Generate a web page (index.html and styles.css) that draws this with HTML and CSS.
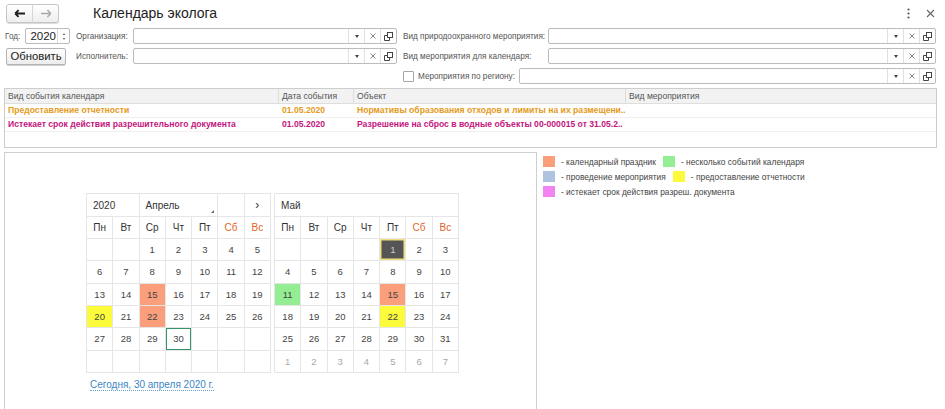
FILE: index.html
```html
<!DOCTYPE html>
<html lang="ru">
<head>
<meta charset="utf-8">
<title>Календарь эколога</title>
<link rel="stylesheet" href="styles.css">
</head>
<body>
<header class="topbar">
  <div class="nav">
    <button class="navbtn back"><svg width="12" height="9" viewBox="0 0 12 9"><path d="M1.2 4.5H11M1.2 4.5L4.6 1.1M1.2 4.5L4.6 7.9" stroke="#1e1e1e" stroke-width="1.8" fill="none"/></svg></button>
    <button class="navbtn fwd"><svg width="12" height="9" viewBox="0 0 12 9"><path d="M1 4.5H10.8M10.8 4.5L7.4 1.1M10.8 4.5L7.4 7.9" stroke="#a8a8a8" stroke-width="1.4" fill="none"/></svg></button>
  </div>
  <h1 class="title">Календарь эколога</h1>
  <div class="winctl">
    <span class="wbtn"><svg width="3" height="11" viewBox="0 0 3 11"><circle cx="1.5" cy="1.5" r="1.1" fill="#555"/><circle cx="1.5" cy="5.5" r="1.1" fill="#555"/><circle cx="1.5" cy="9.5" r="1.1" fill="#555"/></svg></span>
    <span class="wbtn"><svg width="9" height="9" viewBox="0 0 9 9"><path d="M1 1L8 8M8 1L1 8" stroke="#666" stroke-width="1.1"/></svg></span>
  </div>
</header>

<section class="form">
  <div class="yearwrap">
    <span class="lbl">Год:</span>
    <div class="year"><span class="yv">2020</span><span class="spin"><i class="up"></i><i class="dn"></i></span></div>
  </div>
  <span class="lbl">Организация:</span>
  <div class="field"><span class="inp"></span><span class="fb"><i class="tri"></i></span><span class="fb"><svg width="6" height="6" viewBox="0 0 6 6"><path d="M0.5 0.5L5.5 5.5M5.5 0.5L0.5 5.5" stroke="#777" stroke-width="0.9"/></svg></span><span class="fb"><svg width="9" height="9" viewBox="0 0 9 9"><rect x="3.5" y="0.5" width="5" height="5" fill="none" stroke="#444"/><path d="M3 3.5H0.5V8.5H5.5V6" fill="none" stroke="#444"/></svg></span></div>
  <span></span>
  <span class="lbl">Вид природоохранного мероприятия:</span>
  <div class="field"><span class="inp"></span><span class="fb"><i class="tri"></i></span><span class="fb"><svg width="6" height="6" viewBox="0 0 6 6"><path d="M0.5 0.5L5.5 5.5M5.5 0.5L0.5 5.5" stroke="#777" stroke-width="0.9"/></svg></span><span class="fb"><svg width="9" height="9" viewBox="0 0 9 9"><rect x="3.5" y="0.5" width="5" height="5" fill="none" stroke="#444"/><path d="M3 3.5H0.5V8.5H5.5V6" fill="none" stroke="#444"/></svg></span></div>

  <div class="btncell"><button class="refresh">Обновить</button></div>
  <span class="lbl">Исполнитель:</span>
  <div class="field"><span class="inp"></span><span class="fb"><i class="tri"></i></span><span class="fb"><svg width="6" height="6" viewBox="0 0 6 6"><path d="M0.5 0.5L5.5 5.5M5.5 0.5L0.5 5.5" stroke="#777" stroke-width="0.9"/></svg></span><span class="fb"><svg width="9" height="9" viewBox="0 0 9 9"><rect x="3.5" y="0.5" width="5" height="5" fill="none" stroke="#444"/><path d="M3 3.5H0.5V8.5H5.5V6" fill="none" stroke="#444"/></svg></span></div>
  <span></span>
  <span class="lbl">Вид мероприятия для календаря:</span>
  <div class="field"><span class="inp"></span><span class="fb"><i class="tri"></i></span><span class="fb"><svg width="6" height="6" viewBox="0 0 6 6"><path d="M0.5 0.5L5.5 5.5M5.5 0.5L0.5 5.5" stroke="#777" stroke-width="0.9"/></svg></span><span class="fb"><svg width="9" height="9" viewBox="0 0 9 9"><rect x="3.5" y="0.5" width="5" height="5" fill="none" stroke="#444"/><path d="M3 3.5H0.5V8.5H5.5V6" fill="none" stroke="#444"/></svg></span></div>

  <div class="regionrow">
    <span class="chk"></span>
    <span class="lbl rlbl">Мероприятия по региону:</span>
    <div class="field"><span class="inp"></span><span class="fb"><i class="tri"></i></span><span class="fb"><svg width="6" height="6" viewBox="0 0 6 6"><path d="M0.5 0.5L5.5 5.5M5.5 0.5L0.5 5.5" stroke="#777" stroke-width="0.9"/></svg></span><span class="fb"><svg width="9" height="9" viewBox="0 0 9 9"><rect x="3.5" y="0.5" width="5" height="5" fill="none" stroke="#444"/><path d="M3 3.5H0.5V8.5H5.5V6" fill="none" stroke="#444"/></svg></span></div>
  </div>
</section>

<section class="grid">
  <div class="ghead">
    <span>Вид события календаря</span><span>Дата события</span><span>Объект</span><span>Вид мероприятия</span>
  </div>
  <div class="grow orange">
    <span>Предоставление отчетности</span><span>01.05.2020</span><span>Нормативы образования отходов и лимиты на их размещени..</span><span></span>
  </div>
  <div class="grow magenta">
    <span>Истекает срок действия разрешительного документа</span><span>01.05.2020</span><span>Разрешение на сброс в водные объекты 00-000015 от 31.05.2..</span><span></span>
  </div>
</section>

<section class="bottom">
  <div class="calpanel">
    <div class="cals">
      <div class="cal">
        <div class="ch s2">2020</div><div class="ch s3 month">Апрель<i class="corner"></i></div><div class="ch"></div><div class="ch ctr">›</div>
        <div class="dname">Пн</div><div class="dname">Вт</div><div class="dname">Ср</div><div class="dname">Чт</div><div class="dname">Пт</div><div class="dname we">Сб</div><div class="dname we">Вс</div>
        <div class="d"></div><div class="d"></div><div class="d">1</div><div class="d">2</div><div class="d">3</div><div class="d">4</div><div class="d">5</div>
        <div class="d">6</div><div class="d">7</div><div class="d">8</div><div class="d">9</div><div class="d">10</div><div class="d">11</div><div class="d">12</div>
        <div class="d">13</div><div class="d">14</div><div class="d hol">15</div><div class="d">16</div><div class="d">17</div><div class="d">18</div><div class="d">19</div>
        <div class="d rep">20</div><div class="d">21</div><div class="d hol">22</div><div class="d">23</div><div class="d">24</div><div class="d">25</div><div class="d">26</div>
        <div class="d">27</div><div class="d">28</div><div class="d">29</div><div class="d today">30</div><div class="d"></div><div class="d"></div><div class="d"></div>
        <div class="d"></div><div class="d"></div><div class="d"></div><div class="d"></div><div class="d"></div><div class="d"></div><div class="d"></div>
      </div>
      <div class="cal">
        <div class="ch s7">Май</div>
        <div class="dname">Пн</div><div class="dname">Вт</div><div class="dname">Ср</div><div class="dname">Чт</div><div class="dname">Пт</div><div class="dname we">Сб</div><div class="dname we">Вс</div>
        <div class="d"></div><div class="d"></div><div class="d"></div><div class="d"></div><div class="d sel">1</div><div class="d">2</div><div class="d">3</div>
        <div class="d">4</div><div class="d">5</div><div class="d">6</div><div class="d">7</div><div class="d">8</div><div class="d">9</div><div class="d">10</div>
        <div class="d multi">11</div><div class="d">12</div><div class="d">13</div><div class="d">14</div><div class="d hol">15</div><div class="d">16</div><div class="d">17</div>
        <div class="d">18</div><div class="d">19</div><div class="d">20</div><div class="d">21</div><div class="d rep">22</div><div class="d">23</div><div class="d">24</div>
        <div class="d">25</div><div class="d">26</div><div class="d">27</div><div class="d">28</div><div class="d">29</div><div class="d">30</div><div class="d">31</div>
        <div class="d oth">1</div><div class="d oth">2</div><div class="d oth">3</div><div class="d oth">4</div><div class="d oth">5</div><div class="d oth">6</div><div class="d oth">7</div>
      </div>
    </div>
    <a class="todaylink" href="#">Сегодня, 30 апреля 2020 г.</a>
  </div>

  <div class="legend">
    <div class="lrow"><span class="sq c-hol"></span><span class="lt">- календарный праздник</span><span class="sq c-multi"></span><span class="lt">- несколько событий календаря</span></div>
    <div class="lrow"><span class="sq c-event"></span><span class="lt">- проведение мероприятия</span><span class="sq c-rep"></span><span class="lt">- предоставление отчетности</span></div>
    <div class="lrow"><span class="sq c-exp"></span><span class="lt">- истекает срок действия разреш. документа</span></div>
  </div>
</section>
</body>
</html>
```

FILE: styles.css
```css
html, body {
  margin: 0;
  height: 409px;
  overflow: hidden;
  background: #fff;
}
body {
  font-family: "Liberation Sans", Arial, sans-serif;
  color: #333;
  font-size: 8.6px;
}

/* top bar */
.topbar {
  display: flex;
  align-items: center;
  height: 26px;
  padding-left: 6px;
  padding-right: 4px;
}
.nav {
  display: flex;
  height: 19px;
}
.navbtn {
  width: 27px;
  height: 19px;
  margin: 0;
  padding: 0;
  border: 1px solid #c6c6c6;
  background: linear-gradient(#ffffff, #eeeeee);
  display: flex;
  align-items: center;
  justify-content: center;
  box-shadow: 0 1px 0 #dcdcdc;
}
.navbtn.back { border-radius: 3px 0 0 3px; }
.navbtn.fwd { border-radius: 0 3px 3px 0; border-left: 1px solid #d6d6d6; margin-left: -1px; }
.title {
  margin: 0 0 0 34px;
  font-size: 14px;
  font-weight: normal;
  color: #222;
}
.winctl {
  margin-left: auto;
  display: flex;
}
.wbtn {
  width: 22px;
  height: 18px;
  display: flex;
  align-items: center;
  justify-content: center;
}

/* form */
.form {
  display: grid;
  grid-template-columns: 71px 57px 264px 6px 145px 388px;
  grid-auto-rows: 16px;
  row-gap: 4px;
  margin: 2px 0 0 5px;
  align-items: center;
}
.lbl {
  color: #555;
  font-size: 8.2px;
  white-space: nowrap;
}
.yearwrap {
  display: flex;
  align-items: center;
}
.yearwrap .lbl { width: 20px; }
.year {
  display: flex;
  width: 45px;
  height: 16px;
  box-sizing: border-box;
  border: 1px solid #bcbcbc;
  border-radius: 2px;
}
.yv {
  width: 31px;
  font-size: 11.5px;
  color: #222;
  line-height: 14px;
  text-align: right;
  padding-right: 1px;
  box-sizing: border-box;
}
.spin {
  flex: 1;
  border-left: 1px solid #dcdcdc;
  display: flex;
  flex-direction: column;
  align-items: center;
  justify-content: center;
  gap: 3px;
}
.spin i {
  display: block;
  width: 0;
  height: 0;
  border-left: 1.5px solid transparent;
  border-right: 1.5px solid transparent;
}
.spin .up { border-bottom: 2px solid #444; }
.spin .dn { border-top: 2px solid #444; }

.field {
  display: flex;
  height: 16px;
  box-sizing: border-box;
  border: 1px solid #bcbcbc;
  border-radius: 2px;
  background: #fff;
}
.field .inp { flex: 1; }
.field .fb {
  width: 15px;
  border-left: 1px solid #e0e0e0;
  display: flex;
  align-items: center;
  justify-content: center;
}
.tri {
  display: block;
  width: 0;
  height: 0;
  border-left: 2px solid transparent;
  border-right: 2px solid transparent;
  border-top: 3px solid #444;
}
.btncell { display: flex; }
.refresh {
  margin: 0 0 0 1px;
  width: 60px;
  height: 17px;
  padding: 0;
  font-family: "Liberation Sans", Arial, sans-serif;
  font-size: 11.3px;
  color: #222;
  border: 1px solid #b4b4b4;
  border-radius: 2px;
  background: linear-gradient(#ffffff, #ececec);
  box-shadow: 0 1px 0 #d0d0d0;
}
.regionrow {
  grid-column: 5 / 7;
  display: flex;
  align-items: center;
}
.chk {
  width: 11px;
  height: 11px;
  box-sizing: border-box;
  border: 1px solid #a6a6a6;
  border-radius: 1px;
  background: #fff;
  margin-right: 4px;
}
.rlbl { width: 101px; }
.regionrow .field { flex: 1; }

/* table */
.grid {
  margin: 4px 8px 0 4px;
  height: 60px;
  box-sizing: border-box;
  border: 1px solid #cdcdcd;
}
.ghead, .grow {
  display: grid;
  grid-template-columns: 273px 75px 272px 1fr;
}
.ghead {
  height: 14px;
  background: #f2f2f2;
  border-bottom: 1px solid #dedede;
  color: #555;
  font-size: 8.6px;
  line-height: 14px;
}
.ghead span {
  padding-left: 3px;
  border-left: 1px solid #dcdcdc;
}
.ghead span:first-child { border-left: none; }
.grow {
  height: 13px;
  line-height: 13px;
  border-bottom: 1px solid #f0f0f0;
  font-weight: bold;
  font-size: 8.6px;
}
.grow span {
  padding-left: 4px;
  white-space: nowrap;
  overflow: hidden;
}
.grow span:first-child { padding-left: 3px; }
.orange { color: #e59a1c; }
.magenta { color: #c4157e; }

/* bottom */
.bottom {
  display: flex;
  margin: 4px 0 0 4px;
}
.calpanel {
  width: 533px;
  height: 258px;
  box-sizing: border-box;
  border: 1px solid #cfcfcf;
  padding: 40px 0 0 81px;
}
.cals {
  display: flex;
  gap: 3px;
}
.cal {
  display: grid;
  width: 185px;
  grid-template-columns: repeat(7, 1fr);
  grid-template-rows: 23px 22px repeat(6, 22.33px);
  border-top: 1px solid #e6e6e6;
  border-left: 1px solid #e6e6e6;
  box-sizing: border-box;
}
.cal > div {
  border-right: 1px solid #e6e6e6;
  border-bottom: 1px solid #e6e6e6;
  box-sizing: border-box;
  display: flex;
  align-items: center;
  justify-content: center;
}
.ch {
  font-size: 10px;
  color: #333;
  justify-content: flex-start !important;
  padding-left: 6px;
  position: relative;
}
.ch.ctr { justify-content: center !important; padding-left: 0; font-size: 12px; }
.s2 { grid-column: span 2; }
.s3 { grid-column: span 3; }
.s7 { grid-column: span 7; }
.corner {
  position: absolute;
  right: 3px;
  bottom: 3px;
  width: 0;
  height: 0;
  border-left: 3px solid transparent;
  border-bottom: 3px solid #666;
}
.dname {
  font-size: 10px;
  color: #333;
}
.dname.we { color: #e2622a; }
.d {
  font-size: 9.5px;
  color: #444;
}
.d.oth { color: #a8a8a8; }
.d.hol { background: #fa9e7c; }
.d.rep { background: #fbfb3c; }
.d.multi { background: #93ee93; }
.d.today { box-shadow: inset 0 0 0 1px #34956a; }
.d.sel {
  background: #555555;
  color: #cfcfcf;
  box-shadow: inset 0 0 0 1.5px #efe07c;
}
.todaylink {
  display: inline-block;
  margin: 6px 0 0 4px;
  font-size: 10px;
  color: #3d86c4;
  text-decoration: none;
  border-bottom: 1px dotted #6aa0cc;
  line-height: 11px;
}

.legend {
  margin-left: 6px;
  padding-top: 2px;
}
.lrow {
  display: flex;
  align-items: center;
  height: 15px;
}
.sq {
  width: 12px;
  height: 11px;
  margin-right: 6px;
}
.lt {
  font-size: 8.4px;
  color: #444;
  margin-right: 7px;
  white-space: nowrap;
}
.c-hol { background: #fb9f7a; }
.c-multi { background: #94ee94; }
.c-event { background: #afc2de; }
.c-rep { background: #fbfb3c; }
.c-exp { background: #f184f1; }
```
